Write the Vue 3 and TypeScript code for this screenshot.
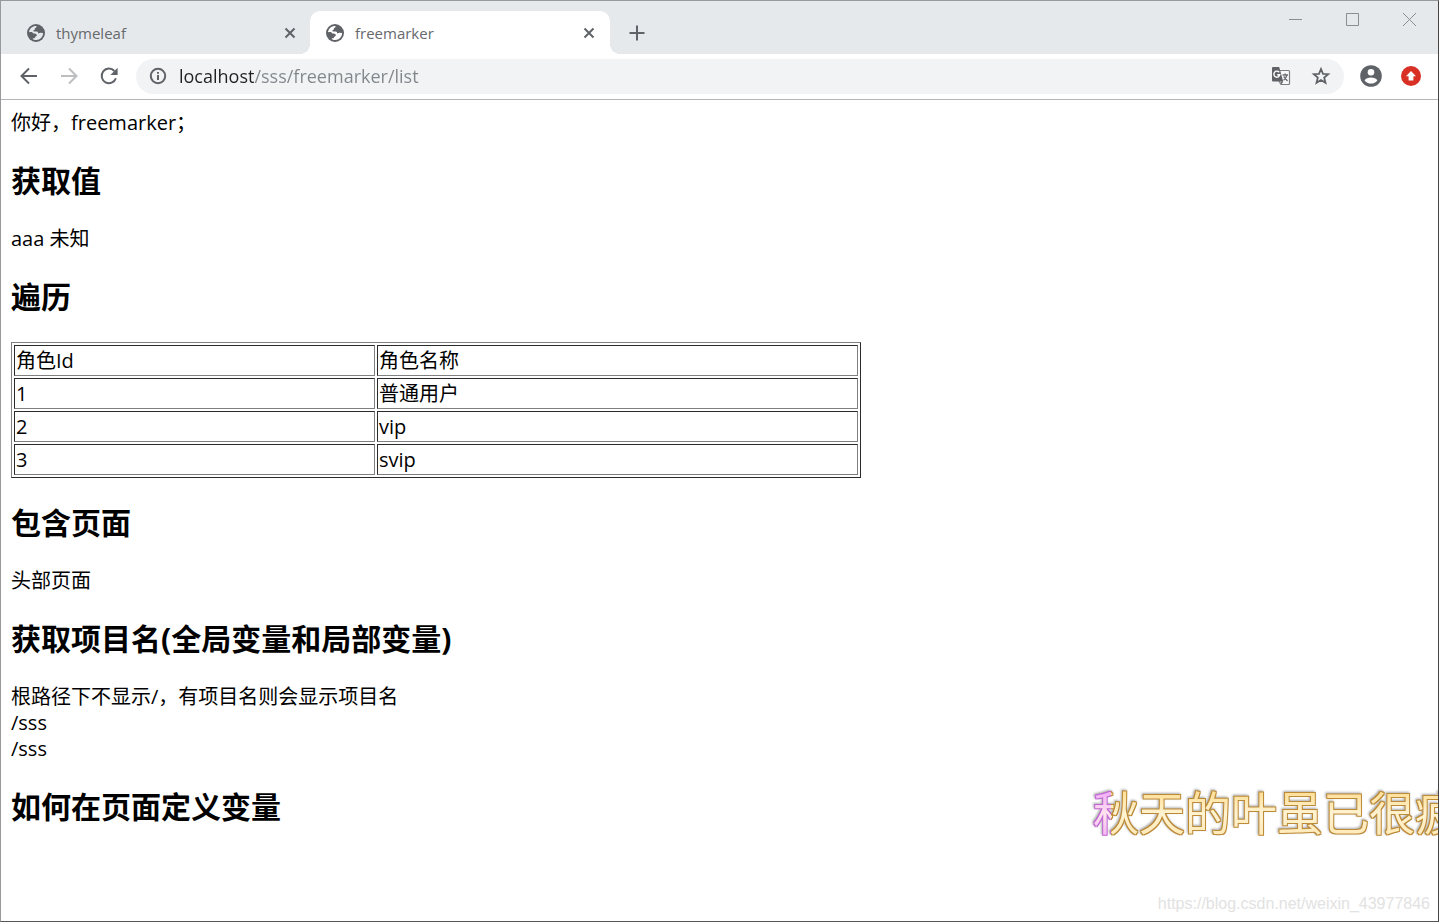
<script setup lang="ts">
import { ref } from 'vue'

interface Tab {
  id: number
  title: string
}

interface Role {
  id: string
  name: string
}

const tabs: Tab[] = [
  { id: 1, title: 'thymeleaf' },
  { id: 2, title: 'freemarker' },
]
const activeTab = ref(2)
const address = ref('localhost/sss/freemarker/list')

const roles: Role[] = [
  { id: '1', name: '普通用户' },
  { id: '2', name: 'vip' },
  { id: '3', name: 'svip' },
]
</script>

<template>
  <div class="window">
    <header class="strip">
      <nav class="tabs" aria-label="Tabs">
        <div v-for="tab in tabs" :key="tab.id" class="tab" :class="{ active: tab.id === activeTab }">
          <button class="tab-main" type="button" @click="activeTab = tab.id">
            <svg class="globe" viewBox="0 0 18 18" aria-hidden="true">
              <circle cx="9" cy="9" r="9" fill="#5f6368" />
              <path
                class="land"
                d="M9.6 2C9.8 2.9 9.2 3.4 8.6 3.8C7.8 4.3 7.6 5 7.8 5.8C6.6 5.9 6.3 6.4 6.6 7.4H9.6C10.9 7.4 11.2 8.2 11.2 9.4C12.4 9.4 13.2 9.2 13.6 8.6C14.4 9.2 15.2 9 16.1 8.8C16.2 12.6 13.2 16 9.2 16.1C7.4 16.1 6.3 15.6 5.5 15.1C6.2 14.2 7.2 14.6 7.8 13.8C8.2 13.2 8 12.6 8.8 12.4C9.8 12.2 10 11.4 9.6 10.6C9 9.4 8 9.8 6.6 9.5C5.6 9.2 5.6 8.4 4.8 8.1C3.8 7.8 3 8.2 2 8.2C2.4 4.6 5.6 1.8 9.6 2Z"
              />
            </svg>
            <span>{{ tab.title }}</span>
          </button>
          <button class="tab-close" type="button" :aria-label="'Close ' + tab.title">
            <svg viewBox="0 0 12 12" aria-hidden="true"><path d="M1.5 1.5L10.5 10.5M10.5 1.5L1.5 10.5" /></svg>
          </button>
        </div>
      </nav>
      <button class="new-tab" type="button" aria-label="New tab">
        <svg viewBox="0 0 16 16" aria-hidden="true"><path d="M8 .5V15.5M.5 8H15.5" /></svg>
      </button>
      <div class="controls">
        <button type="button" aria-label="Minimize">
          <svg viewBox="0 0 14 14" aria-hidden="true"><path d="M0 7.5H13" /></svg>
        </button>
        <button type="button" aria-label="Maximize">
          <svg viewBox="0 0 14 14" aria-hidden="true"><path d="M.5 1.5H12.5V13.5H.5Z" /></svg>
        </button>
        <button type="button" aria-label="Close">
          <svg viewBox="0 0 14 14" aria-hidden="true"><path d="M0 1L13 14M13 1L0 14" /></svg>
        </button>
      </div>
    </header>

    <div class="toolbar">
      <button class="tool" type="button" aria-label="Back">
        <svg viewBox="0 0 20 20" aria-hidden="true"><path class="line" d="M18 10H3M10 2.5L2.5 10L10 17.5" /></svg>
      </button>
      <button class="tool" type="button" aria-label="Forward" disabled>
        <svg viewBox="0 0 20 20" aria-hidden="true"><path class="line" d="M2 10H17M10 2.5L17.5 10L10 17.5" /></svg>
      </button>
      <button class="tool" type="button" aria-label="Reload">
        <svg viewBox="0 0 20 20" aria-hidden="true">
          <path class="line" d="M16.9 12.2A7.3 7.3 0 1 1 15.4 5" />
          <path class="solid" d="M18.6 1.8V9H11.4Z" />
        </svg>
      </button>
      <div class="omnibox">
        <button class="site" type="button" aria-label="Site information">
          <svg viewBox="0 0 18 18" aria-hidden="true">
            <circle cx="9" cy="9" r="7.2" />
            <path d="M9 8V13M9 5V6.8" />
          </svg>
        </button>
        <input v-model="address" class="address" type="text" aria-label="Address" spellcheck="false" />
        <button class="small" type="button" aria-label="Translate">
          <svg viewBox="0 0 20 20" aria-hidden="true">
            <path d="M9 4.5H17.5Q18.5 4.5 18.5 5.5V17.5Q18.5 18.5 17.5 18.5H10L8 15" fill="#f8f9fa" stroke="#7b7f83" stroke-width="1.2" />
            <path d="M2 1H8.2L12.2 15.5H2Q1 15.5 1 14.5V2Q1 1 2 1Z" fill="#5f6368" />
            <path d="M9.5 15.5H12.2L10.5 18.5Z" fill="#5f6368" />
            <path d="M8.2 6.3A3 3 0 1 0 8.8 8.7H6.2" fill="none" stroke="#fff" stroke-width="1.4" />
            <path d="M11.5 9H17M14.2 7.5V9M16 9Q15 12.5 12.5 14.2M12.7 10.5L16.5 15" fill="none" stroke="#6b6f73" stroke-width="1.3" />
          </svg>
        </button>
        <button class="small" type="button" aria-label="Bookmark">
          <svg viewBox="0 0 20 20" aria-hidden="true">
            <path
              d="M10 3L12 7.8L17.2 8.2L13.2 11.6L14.5 16.8L10 14L5.5 16.8L6.8 11.6L2.8 8.2L8 7.8Z"
              fill="none"
              stroke="#5f6368"
              stroke-width="1.8"
            />
          </svg>
        </button>
      </div>
      <button class="round" type="button" aria-label="Profile">
        <svg viewBox="0 0 22 22" aria-hidden="true">
          <circle cx="11" cy="11" r="10.8" fill="#5f6368" />
          <circle cx="11" cy="7.2" r="3.3" fill="#fff" />
          <path d="M4.6 15.4C5.6 13.4 8.4 12.6 11 12.6S16.4 13.4 17.4 15.4C16 17.4 13.6 18.6 11 18.6S6 17.4 4.6 15.4Z" fill="#fff" />
        </svg>
      </button>
      <button class="round" type="button" aria-label="Update">
        <svg viewBox="0 0 22 22" aria-hidden="true">
          <circle cx="11" cy="11" r="10" fill="#d93025" />
          <path d="M11 6L16 11.3H13.4V15.6H8.6V11.3H6Z" fill="#fff" />
        </svg>
      </button>
    </div>

    <main class="page">
      <div>你好，freemarker；</div>
      <h2>获取值</h2>
      <div>aaa 未知</div>
      <h2>遍历</h2>
      <table>
        <colgroup>
          <col class="col-id" />
          <col />
        </colgroup>
        <tbody>
          <tr>
            <td>角色Id</td>
            <td>角色名称</td>
          </tr>
          <tr v-for="role in roles" :key="role.id">
            <td>{{ role.id }}</td>
            <td>{{ role.name }}</td>
          </tr>
        </tbody>
      </table>
      <h2>包含页面</h2>
      <div>头部页面</div>
      <h2>获取项目名(全局变量和局部变量)</h2>
      <div>根路径下不显示/，有项目名则会显示项目名</div>
      <div>/sss</div>
      <div>/sss</div>
      <h2>如何在页面定义变量</h2>
    </main>

    <svg class="lyric" viewBox="0 0 350 60">
      <defs>
        <linearGradient id="gold" x1="0" y1="0" x2="0" y2="1">
          <stop offset="0.15" stop-color="#ffe09a" />
          <stop offset="0.5" stop-color="#fff3d2" />
          <stop offset="0.85" stop-color="#ffe9b8" />
        </linearGradient>
        <linearGradient id="pink" x1="0" y1="0" x2="0" y2="1">
          <stop offset="0.15" stop-color="#f0b0f8" />
          <stop offset="0.5" stop-color="#ffe4ee" />
          <stop offset="0.85" stop-color="#f4b8f4" />
        </linearGradient>
        <pattern id="fill" patternUnits="userSpaceOnUse" width="400" height="60">
          <rect width="400" height="60" fill="url(#gold)" />
          <rect width="22" height="60" fill="url(#pink)" />
        </pattern>
        <!-- One-pixel contour: violet over the sung part, brown over the rest -->
        <filter id="contour" filterUnits="userSpaceOnUse" x="0" y="0" width="350" height="60" color-interpolation-filters="sRGB">
          <feMorphology in="SourceAlpha" operator="dilate" radius="1" result="wide" />
          <feFlood flood-color="#bd8a35" result="brown" />
          <feFlood flood-color="#c265d4" x="0" y="0" width="22" height="60" result="violet" />
          <feMerge result="tint">
            <feMergeNode in="brown" />
            <feMergeNode in="violet" />
          </feMerge>
          <feComposite in="tint" in2="wide" operator="in" result="edge" />
          <feMerge>
            <feMergeNode in="edge" />
            <feMergeNode in="SourceGraphic" />
          </feMerge>
        </filter>
      </defs>
      <text x="4" y="46" fill="url(#fill)" filter="url(#contour)">秋天的叶虽已很疲</text>
    </svg>
    <div class="watermark">https://blog.csdn.net/weixin_43977846</div>
  </div>
</template>

<style>
body {
  margin: 0;
}
</style>

<style scoped>
.window {
  position: relative;
  display: flex;
  flex-direction: column;
  box-sizing: border-box;
  min-height: 100vh;
  overflow: hidden;
  border: 1px solid;
  border-color: #97999c #444 #555 #97999c;
  background: #fff;
  font-family: 'Open Sans', 'Noto Sans CJK SC', sans-serif;
}

button {
  display: flex;
  align-items: center;
  justify-content: center;
  margin: 0;
  padding: 0;
  border: 0;
  background: none;
  color: inherit;
  font: inherit;
}

svg {
  display: block;
}

.strip {
  display: flex;
  align-items: flex-end;
  height: 53px;
  padding-left: 10px;
  background: #e6e9ec;
}

.tabs {
  display: flex;
}

.tab {
  position: relative;
  display: flex;
  align-items: center;
  box-sizing: border-box;
  width: 299px;
  height: 43px;
  padding: 0 14px 0 16px;
  border-radius: 10px 10px 0 0;
  color: #66696d;
  font-size: 15px;
}

.tab.active {
  width: 300px;
  padding-right: 15px;
  background: #fff;
}

/* Outward curves where the active tab meets the toolbar */
.tab.active::before,
.tab.active::after {
  content: '';
  position: absolute;
  bottom: 0;
  width: 10px;
  height: 10px;
}

.tab.active::before {
  right: 100%;
  background: radial-gradient(circle at 0 0, #e6e9ec 10px, #fff 10px);
}

.tab.active::after {
  left: 100%;
  background: radial-gradient(circle at 100% 0, #e6e9ec 10px, #fff 10px);
}

.tab-main {
  flex: 1;
  justify-content: flex-start;
  gap: 11px;
}

.globe {
  width: 18px;
  height: 18px;
}

.land {
  fill: #e6e9ec;
}

.active .land {
  fill: #fff;
}

.tab-close svg {
  width: 12px;
  height: 12px;
  fill: none;
  stroke: #5f6368;
  stroke-width: 2;
}

.new-tab {
  width: 36px;
  height: 43px;
  margin-left: 9px;
}

.new-tab svg {
  width: 16px;
  height: 16px;
  stroke: #5f6368;
  stroke-width: 2;
}

.controls {
  display: flex;
  align-self: flex-start;
  margin-left: auto;
}

.controls button {
  width: 57px;
  height: 36px;
}

.controls svg {
  width: 14px;
  height: 14px;
  fill: none;
  stroke: #8b8d90;
  stroke-width: 1;
}

.toolbar {
  display: flex;
  align-items: center;
  box-sizing: border-box;
  height: 46px;
  padding: 0 16px 1px 18px;
  border-bottom: 1px solid #b4b5b7;
  color: #5f6368;
}

.tool {
  width: 20px;
  height: 34px;
  margin-right: 20px;
}

.tool:nth-child(3) {
  margin-right: 17px;
}

.tool:disabled {
  color: #bcbebf;
}

.tool svg {
  width: 20px;
  height: 20px;
}

.line {
  fill: none;
  stroke: currentColor;
  stroke-width: 2;
}

.solid {
  fill: currentColor;
}

.omnibox {
  display: flex;
  flex: 1;
  align-items: center;
  box-sizing: border-box;
  height: 35px;
  margin: 1px 16px 0 0;
  padding: 0 13px 1px;
  border-radius: 18px;
  background: #f1f3f4;
}

.site svg {
  width: 18px;
  height: 18px;
  fill: none;
  stroke: #5f6368;
  stroke-width: 2;
}

/* The host part of the address is dark, the path is grey */
.address {
  flex: 1;
  min-width: 0;
  height: 28px;
  margin-left: 12px;
  padding: 0;
  border: 0;
  outline: 0;
  background: linear-gradient(to right, #202124 75px, #80868b 75px);
  background-clip: text;
  color: transparent;
  font: 18px/28px 'Open Sans', sans-serif;
}

.small {
  margin-left: 20px;
}

.small svg {
  width: 20px;
  height: 20px;
}

.round {
  width: 22px;
  height: 34px;
}

.round + .round {
  margin-left: 18px;
}

.round svg {
  width: 22px;
  height: 22px;
}

.page {
  padding: 10px;
  color: #000;
  font-size: 20px;
  line-height: 26px;
}

h2 {
  margin: 25px 0;
  font-size: 30px;
  font-weight: 700;
  line-height: 40px;
}

table {
  box-sizing: border-box;
  width: 850px;
  max-width: 100%;
  border: 1px solid;
  border-color: #808080 #2b2b2b #2b2b2b #808080;
  border-collapse: separate;
  border-spacing: 2px;
  table-layout: fixed;
}

.col-id {
  width: 361px;
}

td {
  padding: 1px;
  border: 1px solid;
  border-color: #2b2b2b #808080 #808080 #2b2b2b;
  line-height: 27px;
}

.lyric {
  position: absolute;
  right: -1px;
  bottom: 77px;
  width: 350px;
  height: 60px;
  filter: drop-shadow(-1px -1px 1px #aaa);
}

.lyric text {
  font-family: 'Noto Sans CJK SC', sans-serif;
  font-size: 46px;
  font-weight: 400;
}

.watermark {
  position: absolute;
  right: 8px;
  bottom: 8px;
  color: #e2e2e2;
  font: 16px/18px 'Liberation Sans', Arial, sans-serif;
}
</style>
